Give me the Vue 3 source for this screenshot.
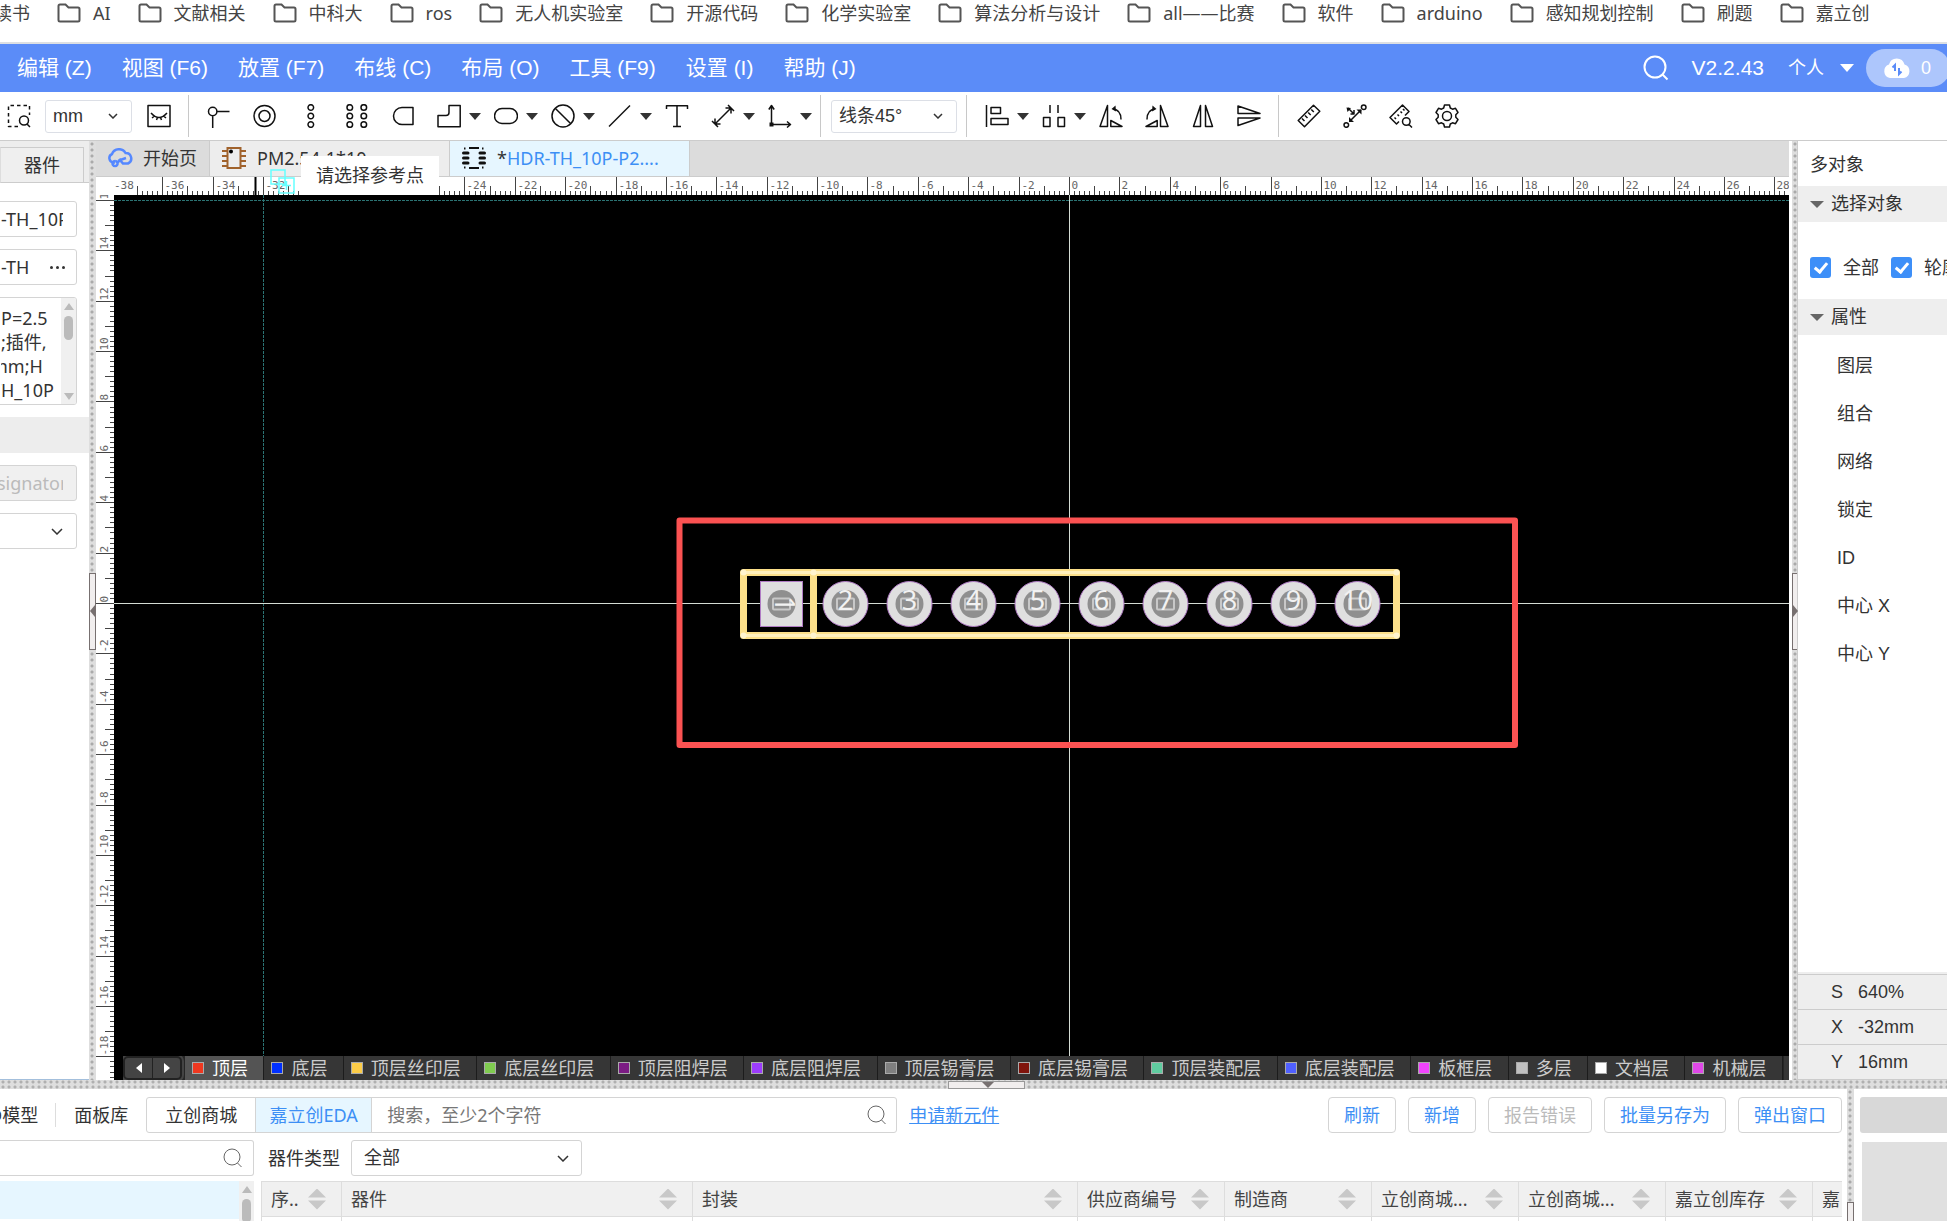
<script setup>
const bookmarks = ['AI', '文献相关', '中科大', 'ros', '无人机实验室', '开源代码', '化学实验室', '算法分析与设计', 'all——比赛', '软件', 'arduino', '感知规划控制', '刷题', '嘉立创']
const menus = ['编辑 (Z)', '视图 (F6)', '放置 (F7)', '布线 (C)', '布局 (O)', '工具 (F9)', '设置 (I)', '帮助 (J)']

const drawTools = [
  { name: '引脚', line: 'M1.500 7.500a4.200 4.200 0 1 0 8.400 0a4.200 4.200 0 1 0-8.400 0M10 7.500H22.500M5.700 12V24' },
  { name: '过孔', line: 'M1 12a10.500 10.500 0 1 0 21 0a10.500 10.500 0 1 0-21 0M6 12a5.500 5.500 0 1 0 11 0a5.500 5.500 0 1 0-11 0' },
  { name: '单排焊盘', line: 'M9 3.500a2.800 2.800 0 1 0 5.600 0a2.800 2.800 0 1 0-5.600 0M9 12a2.800 2.800 0 1 0 5.600 0a2.800 2.800 0 1 0-5.600 0M9 20.500a2.800 2.800 0 1 0 5.600 0a2.800 2.800 0 1 0-5.600 0' },
  { name: '双排焊盘', line: 'M2 3.500a2.800 2.800 0 1 0 5.600 0a2.800 2.800 0 1 0-5.600 0M2 12a2.800 2.800 0 1 0 5.600 0a2.800 2.800 0 1 0-5.600 0M2 20.500a2.800 2.800 0 1 0 5.600 0a2.800 2.800 0 1 0-5.600 0M16 3.500a2.800 2.800 0 1 0 5.600 0a2.800 2.800 0 1 0-5.600 0M16 12a2.800 2.800 0 1 0 5.600 0a2.800 2.800 0 1 0-5.600 0M16 20.500a2.800 2.800 0 1 0 5.600 0a2.800 2.800 0 1 0-5.600 0' },
  { name: '异形焊盘', line: 'M22 3.500V20.500H11a8.500 8.500 0 0 1 0-17z' },
  { name: '折线区域', drop: true, line: 'M12 1.500H23.200V22.800H1V11.500H9Q12 11.500 12 8.500z' },
  { name: '填充区域', drop: true, line: 'M8 4.500h8a7.500 7.500 0 0 1 0 15H8a7.500 7.500 0 0 1 0-15z' },
  { name: '禁止区域', drop: true, line: 'M1 12a11 11 0 1 0 22 0a11 11 0 1 0-22 0M4.200 4.200L19.800 19.800' },
  { name: '线条', drop: true, line: 'M1 22.500L22 1.500' },
  { name: '文本', line: 'M1.500 5V1.800H22.500V5M12 1.800V22.500M8 22.500H16' },
  { name: '尺寸', drop: true, line: 'M4 20L20 4M4 14.500V20H9.500M14.500 4H20V9.500M1 17L7 23M17 1L23 7' },
  { name: '画布原点', drop: true, line: 'M3.500 2V20.500H22M.8 5.500L3.500 1.500L6.200 5.500M19 17.500L22.500 20.500L19 23.500', dot: 'M1.500 18.500h4v4h-4z' },
]
const arrangeTools = [
  { name: '对齐', drop: true, line: 'M1.500 1V23M6 3.500H15.500V9.500H6zM6 14.500H23V20.500H6z' },
  { name: '分布', drop: true, line: 'M8 1V9M16 1V9M1.500 13.500H8V22.500H1.500zM16 13.500H22.500V22.500H16z' },
  { name: '左旋', line: 'M8.500 1.500V22.500H1zM11.800 22.500V16.500L23 22.500zM14 5C19 5.500 22 9.500 22 15.500', dot: 'M12.500 5L16.500 1.500L17 7.500z' },
  { name: '右旋', line: 'M15.500 1.500V22.500H23zM12.200 22.500V16.500L1 22.500zM10 5C5 5.500 2 9.500 2 15.500', dot: 'M11.500 5L7.500 1.500L7 7.500z' },
  { name: '水平翻转', line: 'M9.500 1.500V22.500H2.500zM14.500 1.500V22.500H21.500z' },
  { name: '垂直翻转', line: 'M1 9.500H23L1 2zM1 14H23L1 21.500z' },
]
const inspectTools = [
  { name: '测量', line: 'M16.500 1.200L22.800 7.200L7.500 22.800L1.200 16.500zM5 14.500L7.500 17M8 11.500L10.500 14M11.200 8.500L13.700 11M14.300 5.500L16.800 8' },
  { name: '网络间距', line: 'M7 17L18 6M1 21a2.300 2.300 0 1 0 4.600 0a2.300 2.300 0 1 0-4.600 0M18.400 3.200a2.300 2.300 0 1 0 4.600 0a2.300 2.300 0 1 0-4.600 0M5 4L11 10M11 6V10H7.500', dot: 'M3.500 3.500L8 4L4.500 8zM6 18V13L11 18zM18.500 5.500V10.500L13.500 5.500z' },
  { name: '查找距离', line: 'M10 17.500L7.500 20L1 13.500L13.500 1L20 7.500L16 11.500M5.500 13.500L7 15M8.500 10.500L10 12M11.500 7.500L13 9M14 5L15.500 6.500M13.500 17.500a3.800 3.800 0 1 0 7.600 0a3.800 3.800 0 1 0-7.600 0M20 20.500L23 23.500' },
  { name: '设置', line: 'M9.500 1H14.500L15.300 4L17.500 5.200L20.500 4.300L23 8.500L20.800 10.700V13.300L23 15.500L20.500 19.700L17.500 18.800L15.300 20L14.500 23H9.500L8.700 20L6.500 18.800L3.500 19.700L1 15.500L3.200 13.300V10.700L1 8.500L3.500 4.300L6.500 5.200L8.700 4zM7.500 12a4.500 4.500 0 1 0 9 0a4.500 4.500 0 1 0-9 0' },
]
const toolGroups = [drawTools, arrangeTools, inspectTools]

const UNIT = 25.19
const ORIGIN_X = 955.5
const ORIGIN_Y = 408.5

function ticks(from, to, origin, dir, vertical) {
  let path = ''
  const labels = []
  for (let i = from * 5; i <= to * 5; i++) {
    const p = Math.floor(origin + dir * (i / 5) * UNIT) + 0.5
    if (p < 0) continue
    const len = i % 10 === 0 ? 18 : i % 5 === 0 ? 9 : 4
    path += vertical ? `M18 ${p}H${18 - len}` : `M${p} 18V${18 - len}`
    if (i % 10 === 0) labels.push({ text: String(i / 5), p })
  }
  return { path, labels }
}
const rulerX = ticks(-37, 100, ORIGIN_X, 1, false)
rulerX.labels.unshift({ text: '-38', p: -2 })
const rulerY = ticks(-60, 16, ORIGIN_Y, -1, true)

const pads = Array.from({ length: 10 }, (_, i) => ({ n: i + 1, x: -288 + i * 64 }))

const layers = [
  ['顶层', '#f03820'], ['底层', '#0030ff'], ['顶层丝印层', '#fccc48'], ['底层丝印层', '#80cc50'],
  ['顶层阻焊层', '#7c1c84'], ['底层阻焊层', '#9c3cfc'], ['顶层锡膏层', '#808080'], ['底层锡膏层', '#80140c'],
  ['顶层装配层', '#60cca0'], ['底层装配层', '#5060ff'], ['板框层', '#f044fc'], ['多层', '#c0c0c0'],
  ['文档层', '#ffffff'], ['机械层', '#e048e8'],
]
const props = ['图层', '组合', '网络', '锁定', 'ID', '中心 X', '中心 Y']
const status = [['S', '640%'], ['X', '-32mm'], ['Y', '16mm']]
const actions = ['刷新', '新增', '报告错误', '批量另存为', '弹出窗口']
const columns = [
  ['序..', 'c-index'], ['器件', 'c-part'], ['封装', 'c-pack'], ['供应商编号', 'c-std'], ['制造商', 'c-std'],
  ['立创商城...', 'c-std'], ['立创商城...', 'c-std'], ['嘉立创库存', 'c-std'], ['嘉', 'c-last'],
]
</script>

<template>
  <div class="app">
    <nav class="bookmarks">
      <a href="#" class="bookmark cut">读书</a>
      <a v-for="b in bookmarks" :key="b" href="#" class="bookmark">
        <svg width="24" height="20" viewBox="0 0 24 20"><path d="M3 1.500H8.500L11.500 4.500H21Q22.500 4.500 22.500 6V17Q22.500 18.500 21 18.500H3Q1.500 18.500 1.500 17V3Q1.500 1.500 3 1.500z" /></svg>
        <span>{{ b }}</span>
      </a>
    </nav>

    <header class="menubar">
      <button v-for="m in menus" :key="m" class="menu">{{ m }}</button>
      <div class="account">
        <button class="plain" aria-label="搜索">
          <svg class="lens" width="26" height="26" viewBox="0 0 26 26"><circle cx="12" cy="12" r="10.500" /><path d="M19.500 19.500L24.500 24.500" /></svg>
        </button>
        <span class="version">V2.2.43</span>
        <button class="plain user">个人<i class="caret"></i></button>
        <button class="sync">
          <svg width="28" height="22" viewBox="0 0 28 22">
            <path fill="#fff" d="M7 21a7 7 0 0 1-1-13.500a8 8 0 0 1 15.500 0A7 7 0 0 1 21 21z" />
            <path fill="none" stroke="#5b8cf8" stroke-width="2" d="M12 14V8L9.500 10.500M16 11V17L18.500 14.500" />
          </svg>
          <span>0</span>
        </button>
      </div>
    </header>

    <div class="toolbar">
      <button class="tool" aria-label="框选查找">
        <svg class="ico" viewBox="0 0 24 24"><path stroke-dasharray="3.500 3" d="M11 22.500H1.500V1.500H22.500V11" /><circle cx="17" cy="16.500" r="4.500" /><path d="M20 20L23 23" /></svg>
      </button>
      <div class="picker unit">
        <select aria-label="单位"><option>mm</option></select>
        <svg width="10" height="6" viewBox="0 0 10 6"><path d="M1 1L5 5L9 1" /></svg>
      </div>
      <button class="tool" aria-label="显示">
        <svg class="ico" viewBox="0 0 24 24"><path d="M1 1.500H23V22.500H1zM4 9Q12 18 20 9M5 14L7.500 12M9.500 16L10.500 13.500M14.500 16L13.500 13.500M19 14L16.500 12" /></svg>
      </button>
      <template v-for="(g, gi) in toolGroups" :key="gi">
        <span class="sep"></span>
        <div v-if="gi === 1" class="picker angle">
          <select aria-label="线条角度"><option>线条45°</option></select>
          <svg width="10" height="6" viewBox="0 0 10 6"><path d="M1 1L5 5L9 1" /></svg>
        </div>
        <span v-if="gi === 1" class="sep near"></span>
        <div class="group" :class="{ first: gi === 0 }">
          <button v-for="t in g" :key="t.name" class="tool" :class="{ drop: t.drop }" :aria-label="t.name">
            <svg class="ico" viewBox="0 0 24 24"><path :d="t.line" /><path v-if="t.dot" class="solid" :d="t.dot" /></svg>
            <i v-if="t.drop" class="caret"></i>
          </button>
        </div>
      </template>
    </div>

    <main class="work">
      <aside class="left">
        <div class="left-tabs"><button class="left-tab">器件</button></div>
        <div class="left-form">
          <input class="field" aria-label="名称" value="-TH_10P" />
          <div class="field combo"><span>-TH</span><button class="plain dots" aria-label="更多"><i></i><i></i><i></i></button></div>
          <div class="field note">
            <p>P=2.5<br />;插件,<br /><span class="clip">mm;H</span><br /><span class="clip">TH_10P</span></p>
            <div class="scroll"><i class="up"></i><i class="thumb"></i><i class="down"></i></div>
          </div>
        </div>
        <div class="left-band"></div>
        <div class="left-form">
          <input class="field off" aria-label="位号" value="signator" disabled />
          <div class="field combo"><svg width="12" height="7" viewBox="0 0 12 7"><path d="M1 1L6 6L11 1" /></svg></div>
        </div>
      </aside>
      <div class="split-v west"><span class="grip"><i></i></span></div>

      <section class="editor">
        <div class="tabs">
          <button class="tab home">
            <svg width="26" height="20" viewBox="0 0 26 20"><path fill="none" stroke="#5588ff" stroke-width="2.500" d="M8 14.500H6A4.500 4.500 0 0 1 5 6A7.500 7.500 0 0 1 18.500 5A5.500 5.500 0 0 1 21 15.500H16L13 12L19 10M8 13a2.500 2.500 0 1 0 .1 0M10 15L14 11" /></svg>
            <span>开始页</span>
          </button>
          <button class="tab doc">
            <svg width="24" height="24" viewBox="0 0 24 24"><path fill="none" stroke="#a0622c" stroke-width="2" d="M5.500 2H18.500V22H5.500zM0 5H5M0 10H5M0 15H5M0 20H5M19 5H24M19 10H24M19 15H24M19 20H24" /><circle cx="9" cy="5.500" r="2" /></svg>
            <span>PM2.54-1*10</span>
          </button>
          <button class="tab doc active">
            <svg width="24" height="22" viewBox="0 0 24 22"><path fill="none" stroke="#111" stroke-width="3" stroke-linecap="round" d="M1.500 6H6M1.500 11H6M1.500 16H6M18 6H22.500M18 11H22.500M18 16H22.500" /><path fill="none" stroke="#111" stroke-width="2" d="M7 1H17M7 21H17M2 1.500h1.500M20 1.500h1.500M2 20.500h1.500M20 20.500h1.500" /></svg>
            <span><b>*</b>HDR-TH_10P-P2....</span>
          </button>
          <div class="tip">请选择参考点</div>
          <svg class="ghost" width="26" height="26" viewBox="0 0 26 26"><path d="M1 1H15V15H1zM9 9H24V24H9zM16.500 12V21M12 16.500H21" /></svg>
        </div>
        <div class="ruler-x">
          <svg width="100%" height="18">
            <path class="tick" :d="rulerX.path" />
            <path class="cursor" d="M141.500 0V18" />
            <text v-for="l in rulerX.labels" :key="l.text" :x="l.p + 2" y="12">{{ l.text }}</text>
          </svg>
        </div>
        <div class="stage">
          <svg class="ruler-y" width="18">
            <path class="tick" :d="rulerY.path" />
            <text v-for="l in rulerY.labels" :key="l.text" :transform="`translate(12 ${l.p - 1}) rotate(-90)`">{{ l.text }}</text>
          </svg>
          <div class="board">
            <svg class="pcb">
              <path class="guide" d="M0 5.500H4000M149.500 0V3000" />
              <path class="axis" d="M0 408.500H4000M955.500 0V3000" />
              <g transform="translate(955.500 408.500)">
                <rect class="frame" x="-390" y="-83" width="835.500" height="224.500" />
                <path class="silk" d="M-326-31H327V32H-326zM-256-31V32" />
                <path class="shine" d="M-326-31H327M327 32H-326" />
                <g class="joint">
                  <circle v-for="x in [-326, -256, 327]" :key="'t' + x" :cx="x" cy="-31" r="3" />
                  <circle v-for="x in [-326, -256, 327]" :key="'b' + x" :cx="x" cy="32" r="3" />
                </g>
                <g v-for="p in pads" :key="p.n" :transform="`translate(${p.x} .5)`">
                  <rect v-if="p.n === 1" class="pad" x="-21" y="-22.500" width="42" height="45" />
                  <circle v-else class="pad" r="22.500" />
                  <circle class="hole" r="14" />
                  <rect class="mark" x="-8.500" y="-5.500" width="17" height="11" rx="1" />
                  <text v-if="p.n === 1" class="num" transform="rotate(90)" y="7">1</text>
                  <text v-else class="num" y="6">{{ p.n }}</text>
                </g>
              </g>
            </svg>
            <div class="layers">
              <div class="nav"><button class="plain" aria-label="上一个"><i class="prev"></i></button><button class="plain" aria-label="下一个"><i class="next"></i></button></div>
              <button v-for="(l, i) in layers" :key="l[0]" class="layer" :class="{ on: i === 0 }"><i class="chip" :style="{ background: l[1] }"></i>{{ l[0] }}</button>
              <span class="more"></span>
            </div>
          </div>
        </div>
      </section>

      <div class="split-v east"><span class="grip"><i></i></span></div>
      <aside class="right">
        <h2>多对象</h2>
        <h3><i class="caret"></i>选择对象</h3>
        <div class="checks">
          <label><input type="checkbox" checked /><span>全部</span></label>
          <label><input type="checkbox" checked /><span>轮廓</span></label>
        </div>
        <h3><i class="caret"></i>属性</h3>
        <ul class="props"><li v-for="p in props" :key="p">{{ p }}</li></ul>
        <dl class="status">
          <div v-for="s in status" :key="s[0]"><dt>{{ s[0] }}</dt><dd>{{ s[1] }}</dd></div>
        </dl>
      </aside>
    </main>

    <div class="split-h"><span class="grip"><i></i></span></div>

    <section class="library">
      <div class="lib-main">
        <div class="lib-row">
          <button class="plain kind cut-kind">D模型</button>
          <span class="bar"></span>
          <button class="plain kind">面板库</button>
          <div class="search">
            <button class="src">立创商城</button>
            <button class="src on">嘉立创EDA</button>
            <input aria-label="搜索" placeholder="搜索，至少2个字符" />
            <svg class="lens dark" width="20" height="20" viewBox="0 0 20 20"><circle cx="9" cy="9" r="8" /><path d="M14.500 15L18.500 19" /></svg>
          </div>
          <a href="#" class="apply">申请新元件</a>
          <div class="actions"><button v-for="a in actions" :key="a" class="act" :disabled="a === '报告错误'">{{ a }}</button></div>
        </div>
        <div class="lib-row second-row">
          <div class="filter"><input aria-label="筛选" /><svg class="lens dark" width="20" height="20" viewBox="0 0 20 20"><circle cx="9" cy="9" r="8" /><path d="M14.500 15L18.500 19" /></svg></div>
          <label for="kind">器件类型</label>
          <div class="picker type">
            <select id="kind"><option>全部</option></select>
            <svg width="12" height="7" viewBox="0 0 12 7"><path d="M1 1L6 6L11 1" /></svg>
          </div>
        </div>
        <div class="lib-row third-row">
          <div class="tree"><div class="node"></div><div class="scroll"><i class="up"></i><i class="thumb"></i></div></div>
          <table>
            <thead><tr><th v-for="(c, i) in columns" :key="i" :class="c[1]"><div><span>{{ c[0] }}</span><i v-if="c[1] !== 'c-last'" class="sort"></i></div></th></tr></thead>
            <tbody><tr><td v-for="(c, i) in columns" :key="i"></td></tr></tbody>
          </table>
        </div>
      </div>
      <div class="split-v lib-split"><span class="grip"></span></div>
      <div class="preview"><div class="thumb-a"></div><div class="thumb-b"></div></div>
    </section>
  </div>
</template>

<style>
html, body { margin: 0; overflow: hidden; }
</style>

<style scoped>
* { box-sizing: border-box; }
.app {
  height: 100vh; display: flex; flex-direction: column; overflow: hidden; background: #fff; color: #333;
  font: 18px/24px "Noto Sans", "Noto Sans CJK SC", sans-serif;
}
button, input, select { font: inherit; color: inherit; margin: 0; }
button { padding: 0; border: 0; background: none; white-space: nowrap; }
i { display: block; font-style: normal; flex: none; }
svg { display: block; flex: none; }
.plain { display: flex; align-items: center; }
.caret { border: 6px solid transparent; border-top: 7px solid #333; border-bottom: 0; }

.bookmarks { display: flex; flex: none; gap: 27px; height: 44px; padding-top: 2px; border-bottom: 2px solid #dcdfe3; overflow: hidden; }
.bookmark { display: flex; flex: none; gap: 12px; height: 22px; align-items: center; color: #444; text-decoration: none; white-space: nowrap; }
.bookmark.cut { margin-left: -6px; }
.bookmark path { fill: none; stroke: #555; stroke-width: 2; }

.menubar { display: flex; flex: none; align-items: center; height: 48px; padding-left: 2px; background: #5b8cf8; color: #fff; font-family: "Liberation Sans", "Noto Sans CJK SC", sans-serif; font-size: 21px; overflow: hidden; }
.menu { padding: 0 15px; }
.account { display: flex; flex: none; align-items: center; margin-left: auto; }
.lens { fill: none; stroke: #fff; stroke-width: 2; }
.lens.dark { stroke: #666; stroke-width: 1; }
.version { margin-left: 23px; }
.user { margin-left: 24px; gap: 16px; font-size: 18px; }
.user .caret { border-width: 8px 7px 0; border-top-color: #fff; }
.sync { display: flex; align-items: center; gap: 10px; width: 84px; height: 38px; margin: 0 -3px 0 12px; padding-left: 17px; border-radius: 19px; background: #adc6fc; font-size: 18px; }

.toolbar { display: flex; flex: none; align-items: center; height: 49px; padding-left: 7px; border-bottom: 1px solid #ccc; }
.tool { display: flex; align-items: center; gap: 8px; }
.ico { width: 24px; height: 24px; fill: none; stroke: #111; stroke-width: 1.500; stroke-linejoin: round; }
.ico .solid { fill: #111; stroke: none; }
.group { display: flex; gap: 22px; }
.tool.drop:not(:last-child) { margin-right: -9px; }
.sep { width: 1px; height: 42px; background: #c8c8c8; margin: 0 18px 0 17px; }
.group + .sep { margin-left: 17px; }
.group.first + .sep { margin-left: 8px; }
.sep:has(+ .picker) { margin-right: 10px; }
.picker + .sep { margin-left: 9px; }
.picker { display: flex; align-items: center; position: relative; }
.picker select { width: 100%; height: 33px; padding: 0 7px; border: 1px solid #dcdfe6; border-radius: 3px; background: #fff; appearance: none; font-family: "Liberation Sans", "Noto Sans CJK SC", sans-serif; }
.picker svg { position: absolute; right: 14px; fill: none; stroke: #333; stroke-width: 1.500; pointer-events: none; }
.unit { width: 87px; margin: 0 15px 0 14px; }
.angle { width: 126px; }

.work { display: flex; flex: 1; min-height: 0; }
.left { width: 89px; flex: none; overflow: hidden; border-bottom: 1px solid #a3bfdc; }
.left-tabs { height: 42px; padding-top: 6px; background: #ededed; border-bottom: 1px solid #ccc; }
.left-tab { width: 84px; height: 36px; border: 1px solid #ccc; border-left-color: #ddd; background: #efefef; }
.left-form { display: flex; flex-direction: column; gap: 12px; width: 87px; margin-left: -10px; padding: 18px 0 12px; }
.field { width: 100%; height: 36px; border: 1px solid #d4d4d4; border-radius: 3px; background: #fff; padding: 0 13px 0 10px; }
.field.off { background: #f0f0f0; color: #bbb; opacity: 1; padding-left: 6px; }
.combo { display: flex; align-items: center; justify-content: space-between; padding-right: 11px; }
.combo svg { margin-left: auto; fill: none; stroke: #333; stroke-width: 1.500; }
.combo:has(svg) { padding-right: 13px; }
.dots { gap: 3px; }
.dots i { width: 3px; height: 3px; border-radius: 2px; background: #333; }
.note { display: flex; height: 108px; padding: 8px 0 0 10px; overflow: hidden; }
.note p { flex: 1; margin: 0; height: 100px; overflow: hidden; white-space: nowrap; }
.clip { margin-left: -10px; }
.scroll { display: flex; flex: none; flex-direction: column; align-items: center; width: 15px; background: #f0f0f0; }
.note .scroll { margin-top: -8px; height: 106px; }
.scroll .up { margin: 5px 0 6px; border: 5px solid transparent; border-bottom: 7px solid #bbb; border-top: 0; }
.scroll .thumb { width: 9px; height: 24px; border-radius: 5px; background: #bbb; }
.scroll .down { margin: auto 0 4px; border: 5px solid transparent; border-top: 7px solid #bbb; border-bottom: 0; }
.left-band { height: 36px; background: #ededed; }
.left-band + .left-form { padding-top: 12px; }

.split-v { position: relative; flex: none; width: 7px; background: radial-gradient(circle at 3px 3px, #aaa 1px, #dedede 2px) 0 0 / 7px 6px; }
.split-v .grip { position: absolute; left: 0; width: 7px; border: 1px solid #777070; background: #f1eeee; }
.west .grip { top: 432px; height: 77px; }
.east { width: 9px; border-left: 3px solid #fff; border-right: 1px solid #ccc; background-size: 5px 6px; }
.east .grip { top: 432px; height: 77px; width: 5px; border-right: 0; }
.west .grip i { margin-top: 31px; border: 6px solid transparent; border-right: 5px solid #777070; border-left: 0; }
.east .grip i { margin-top: 31px; border: 6px solid transparent; border-left: 5px solid #777070; border-right: 0; }
.split-h { position: relative; flex: none; height: 9px; background: radial-gradient(circle at 3px 2px, #b0b0b0 1px, #dedede 2px) 0 0 / 6px 5px; }
.split-h .grip { position: absolute; left: 948px; top: 1px; width: 77px; height: 8px; border: 1px solid #999; background: #f1eeee; }
.split-h .grip i { width: 12px; margin-left: 33px; border: 6px solid transparent; border-top: 6px solid #777070; border-bottom: 0; }

.editor { flex: 1; min-width: 0; display: flex; flex-direction: column; }
.tabs { position: relative; display: flex; flex: none; height: 36px; background: #dcdcdc; border-bottom: 1px solid #ccc; }
.tab { display: flex; align-items: center; gap: 10px; padding: 0 0 2px 12px; border-right: 1px solid #ccc; }
.tab.home { width: 114px; padding-left: 11px; }
.tab.doc { width: 240px; background: #ededed; gap: 11px; }
.tab.active { background: #e6f6ff; color: #3d8ff5; }
.tab b { font-weight: 400; color: #333; }
.tip { position: absolute; left: 205px; top: 15px; width: 138px; height: 39px; padding-left: 15px; background: #fff; line-height: 39px; z-index: 2; }
.ghost { position: absolute; left: 174px; top: 28px; z-index: 2; fill: none; stroke: #6ff; stroke-width: 1.500; }
.ruler-x { flex: none; height: 18px; padding-left: 18px; }
.tick { stroke: #444; stroke-width: 1; fill: none; }
.cursor { stroke: #000; stroke-width: 2; }
.ruler-x text, .ruler-y text { font: 11px "DejaVu Sans Mono", monospace; fill: #666; }
.stage { display: flex; flex: 1; min-height: 0; }
.ruler-y { height: 100%; }
.board { position: relative; flex: 1; min-width: 0; display: flex; flex-direction: column; justify-content: flex-end; background: #000; overflow: hidden; }
.pcb { position: absolute; inset: 0; width: 100%; height: 100%; }
.guide { stroke: #2b7373; stroke-dasharray: 3 1; fill: none; }
.axis { stroke: #d4dcd4; fill: none; }
.frame { fill: none; stroke: #fb5252; stroke-width: 6; stroke-linejoin: round; }
.silk { fill: none; stroke: #fce08a; stroke-width: 7; stroke-linejoin: round; }
.shine { fill: none; stroke: #fff0bd; stroke-width: 3; }
.joint { fill: #fff4cf; }
.pad { fill: #dfdfdf; stroke: #b07cc4; stroke-width: 1; }
.hole { fill: #8f8f8f; }
.mark { fill: none; stroke: #c8c8c8; stroke-width: 2; }
.num { font: 27px "Noto Sans", sans-serif; fill: #f2f2f2; text-anchor: middle; }
.layers { position: relative; display: flex; height: 24px; margin-left: 9px; background: #262626; color: #ccc; overflow: hidden; }
.nav { display: flex; flex: none; width: 59px; margin-right: 3px; border: 2px solid #222; border-radius: 5px; outline: 2px solid #444; background: #444; }
.nav button { flex: 1; justify-content: center; }
.nav button + button { border-left: 1px solid #222; }
.prev { border: 5px solid transparent; border-right: 6px solid #fff; border-left: 0; }
.next { border: 5px solid transparent; border-left: 6px solid #fff; border-right: 0; }
.layer { display: flex; flex: 1 0 auto; align-items: center; gap: 8px; padding: 0 15px 0 7px; background: #363636; border-right: 1px solid #1c1c1c; }
.layer.on { background: #545454; color: #fff; }
.chip { width: 12px; height: 12px; border: 1px solid #aaa; }
.more { flex: none; width: 5px; margin-left: 1px; background: #363636; }

.right { width: 149px; flex: none; display: flex; flex-direction: column; overflow: hidden; white-space: nowrap; font-family: "Liberation Sans", "Noto Sans CJK SC", sans-serif; }
.right h2, .right h3 { margin: 0; font: inherit; flex: none; }
.right h2 { height: 45px; line-height: 48px; padding-left: 12px; }
.right h3 { display: flex; align-items: center; gap: 8px; height: 36px; padding-left: 12px; background: #eee; }
.right h3 .caret { border-width: 7px 7px 0; border-top-color: #666; margin-right: -1px; }
.checks { display: flex; gap: 12px; height: 77px; padding: 14px 0 0 12px; align-items: center; }
.checks label { display: flex; flex: none; align-items: center; gap: 12px; }
.checks input { appearance: none; width: 21px; height: 21px; margin: 0; border-radius: 3px; background: #3d8ff8; display: grid; place-items: center; }
.checks input::after { content: ""; width: 5px; height: 10px; margin-top: -2px; border: solid #fff; border-width: 0 3px 3px 0; transform: rotate(40deg); }
.props { list-style: none; margin: 0; padding: 7px 0 0 39px; }
.props li { height: 48px; line-height: 48px; }
.status { margin: auto 0 0; padding-top: 2px; border-bottom: 1px solid #ccc; background: #eee; }
.status div { display: flex; height: 35px; align-items: center; padding-left: 33px; border-top: 1px solid #ccc; }
.status dt { width: 27px; }
.status dd { margin: 0; }

.library { display: flex; flex: none; height: 132px; overflow: hidden; }
.lib-main { flex: 1; min-width: 0; display: flex; flex-direction: column; padding: 8px 5px 0 0; }
.lib-row { display: flex; flex: none; align-items: center; height: 36px; }
.kind { flex: none; }
.cut-kind { margin-left: -11px; }
.bar { width: 1px; height: 24px; margin: 0 18px 0 17px; background: #ddd; }
.search { display: flex; flex: none; align-items: center; width: 751px; height: 36px; margin-left: 18px; padding-right: 9px; border: 1px solid #d4d4d4; border-radius: 3px; }
.src { width: 108px; height: 34px; }
.src.on { width: 117px; background: #e6f6ff; color: #3d8ff5; border: solid #d4d4d4; border-width: 0 1px; }
.search input { flex: 1; min-width: 0; height: 32px; padding: 0 15px; border: 0; background: none; }
.search input::placeholder { color: #777; opacity: 1; }
.apply { flex: none; margin-left: 12px; color: #3d8ff5; }
.actions { display: flex; flex: none; gap: 12px; margin-left: auto; }
.act { height: 36px; padding: 0 15px; border: 1px solid #d4d4d4; border-radius: 4px; color: #3d8ff5; }
.act:disabled { color: #bbb; }
.second-row { margin-top: 7px; }
.filter { display: flex; align-items: center; width: 254px; height: 36px; margin-right: 14px; padding-right: 10px; border: 1px solid #d4d4d4; border-left: 0; border-radius: 0 3px 3px 0; }
.filter input { flex: 1; min-width: 0; border: 0; background: none; }
.type { width: 231px; margin-left: 11px; }
.type select { height: 36px; padding: 0 12px; border-color: #d4d4d4; }
.type svg { right: 13px; }
.third-row { align-items: flex-start; height: 40px; margin-top: 5px; overflow: hidden; }
.tree { display: flex; flex: none; width: 254px; height: 40px; margin-right: 7px; }
.node { flex: 1; height: 38px; background: #e6f6ff; }
table { width: 0; flex: 1; table-layout: fixed; border-collapse: separate; border-spacing: 0; }
th { height: 36px; padding: 0 15px 0 9px; font-weight: 400; color: #444; background: #f0f0f0; border: solid #ddd; border-width: 1px 0 1px 1px; white-space: nowrap; overflow: hidden; }
th div { display: flex; align-items: center; justify-content: space-between; }
td { height: 6px; padding: 0; border-left: 1px solid #ddd; }
.c-index { width: 80px; }
.c-part { width: 351px; }
.c-std { width: 147px; }
.c-last { width: 30px; padding-right: 0; }
.sort { width: 18px; height: 21px; background: #c8c8c8; clip-path: polygon(50% 0, 100% 9px, 0 9px, 0 12px, 100% 12px, 50% 100%, 0 12px, 0 9px); }
.lib-split .grip { top: 113px; height: 30px; }
.preview { display: flex; flex-direction: column; flex: none; width: 93px; gap: 9px; padding: 8px 0 0 6px; }
.thumb-a { flex: none; height: 36px; border-radius: 3px 0 0 3px; background: #d8d8d8; }
.thumb-b { flex: 1; margin-left: 2px; background: #e0e0e0; }
</style>
